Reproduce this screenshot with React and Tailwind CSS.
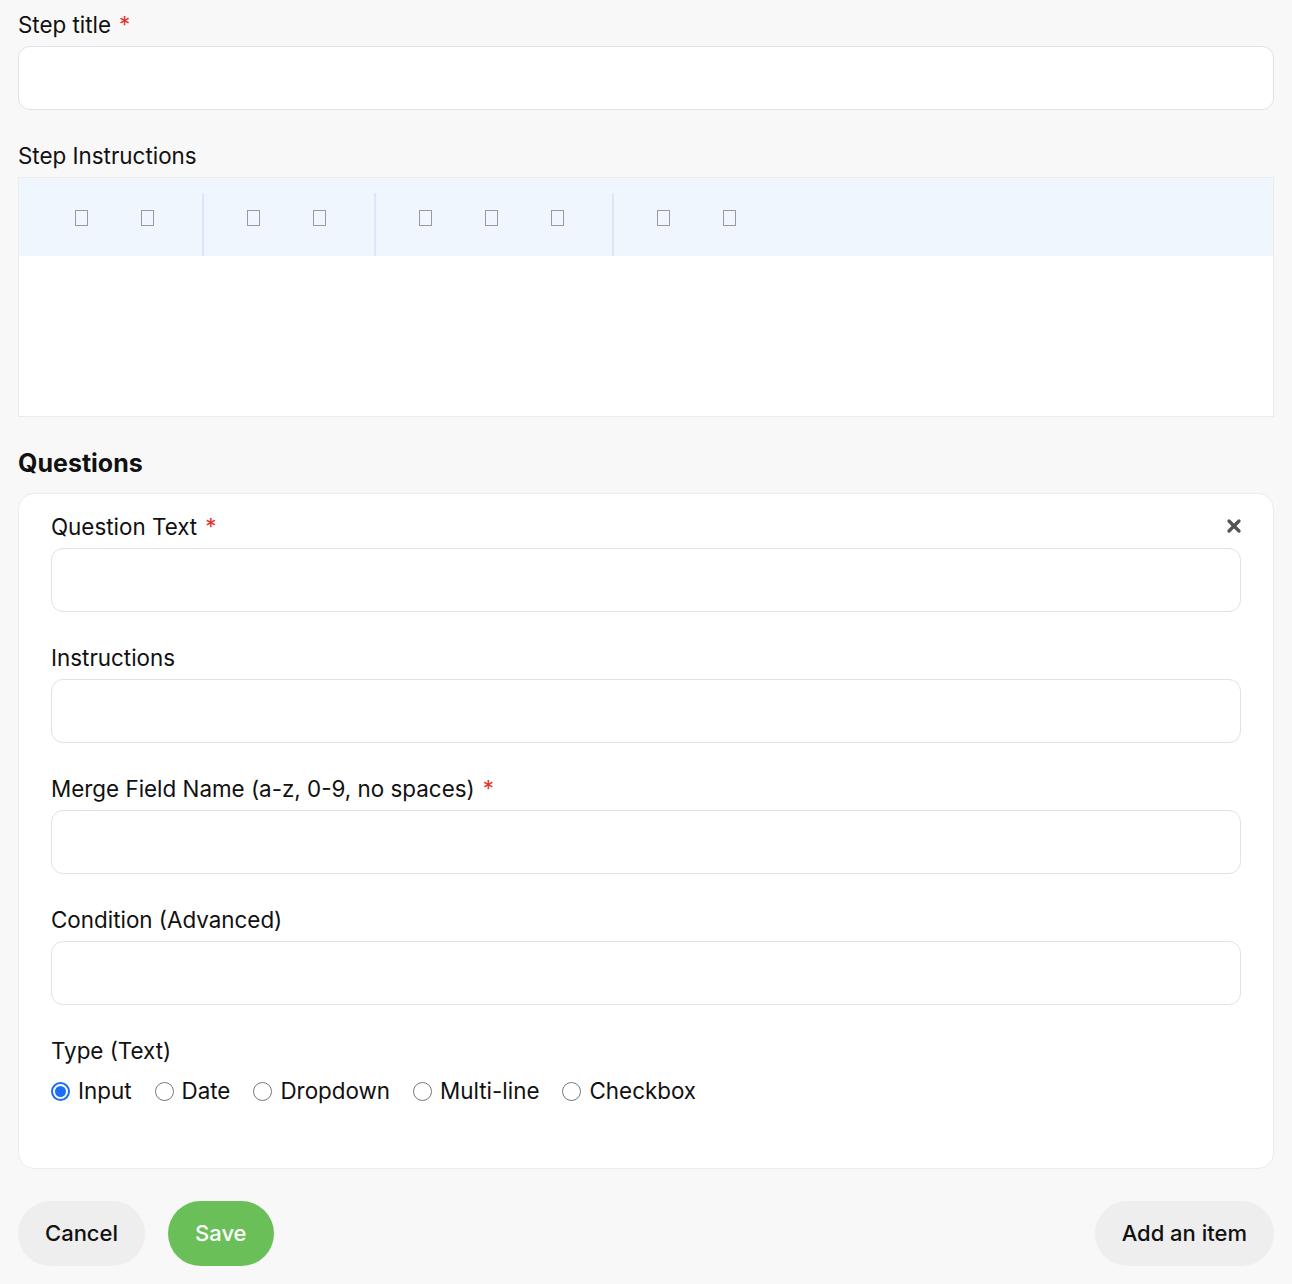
import { X } from 'lucide-react';

const font = { fontFamily: 'Inter, "Noto Sans", sans-serif' };

function Label({ children, required }) {
  return (
    <label className="block text-[22.4px] leading-[30px] text-[#111]">
      {children}
      {required && <span className="ml-2 text-[#e5322d]">*</span>}
    </label>
  );
}

function Field({ label, required, className = '' }) {
  return (
    <div className={className}>
      <Label required={required}>{label}</Label>
      <input className="mt-[6px] block w-full h-[64px] rounded-xl border border-[#e2e0ec] bg-white px-4 text-[20px] outline-none" />
    </div>
  );
}

function ToolBtn() {
  return (
    <div className="w-[66px] h-[63px] flex items-center justify-center pt-[2px]">
      <span className="block w-[13px] h-[16px] border-[1.5px] border-[#9a9a9a]" />
    </div>
  );
}

function Sep() {
  return <div className="self-end w-[2px] h-[63px] bg-[#dbe8fb] ml-[22px] mr-[16px]" />;
}

function Radio({ label, checked }) {
  return (
    <label className="flex items-center mr-[23px]">
      {checked ? (
        <span className="w-[19px] h-[19px] rounded-full border-[2px] border-[#1b6ef3] flex items-center justify-center">
          <span className="w-[11px] h-[11px] rounded-full bg-[#1b6ef3]" />
        </span>
      ) : (
        <span className="w-[19px] h-[19px] rounded-full border border-[#777]" />
      )}
      <span className="ml-[8px] text-[22.4px] leading-[30px] text-[#111]">{label}</span>
    </label>
  );
}

export default function App() {
  return (
    <div className="min-h-[1284px] bg-[#f8f8f8] px-[18px] pt-[10px]" style={font}>
      <Field label="Step title" required />

      <div className="mt-[31px]">
        <Label>Step Instructions</Label>
        <div className="mt-[6px] border border-[#ececec] bg-white">
          <div className="h-[78px] bg-[#f0f6fe] flex items-center pl-[29px]">
            <ToolBtn />
            <ToolBtn />
            <Sep />
            <ToolBtn />
            <ToolBtn />
            <Sep />
            <ToolBtn />
            <ToolBtn />
            <ToolBtn />
            <Sep />
            <ToolBtn />
            <ToolBtn />
          </div>
          <div className="h-[160px]" />
        </div>
      </div>

      <h2 className="mt-[30px] text-[25px] leading-[32px] font-bold text-[#111]">Questions</h2>

      <div className="mt-[14px] rounded-2xl border border-[#ececec] bg-white px-[32px] pt-[18px] pb-[62px]">
        <div className="relative">
          <Field label="Question Text" required />
          <button className="absolute right-[-3px] top-[4px] text-[#555]">
            <X size={20} strokeWidth={4} />
          </button>
        </div>
        <Field label="Instructions" className="mt-[31px]" />
        <Field label="Merge Field Name (a-z, 0-9, no spaces)" required className="mt-[31px]" />
        <Field label="Condition (Advanced)" className="mt-[31px]" />
        <div className="mt-[31px]">
          <Label>Type (Text)</Label>
          <div className="mt-[10px] flex items-center">
            <Radio label="Input" checked />
            <Radio label="Date" />
            <Radio label="Dropdown" />
            <Radio label="Multi-line" />
            <Radio label="Checkbox" />
          </div>
        </div>
      </div>

      <div className="mt-[32px] flex items-center">
        <button className="h-[65px] px-[27px] rounded-full bg-[#eeeeee] text-[22px] font-medium text-[#111]">Cancel</button>
        <button className="ml-[23px] h-[65px] px-[27px] rounded-full bg-[#6bbf59] text-[22px] font-medium text-white">Save</button>
        <button className="ml-auto h-[65px] px-[27px] rounded-full bg-[#eeeeee] text-[22px] font-medium text-[#111]">Add an item</button>
      </div>
    </div>
  );
}
